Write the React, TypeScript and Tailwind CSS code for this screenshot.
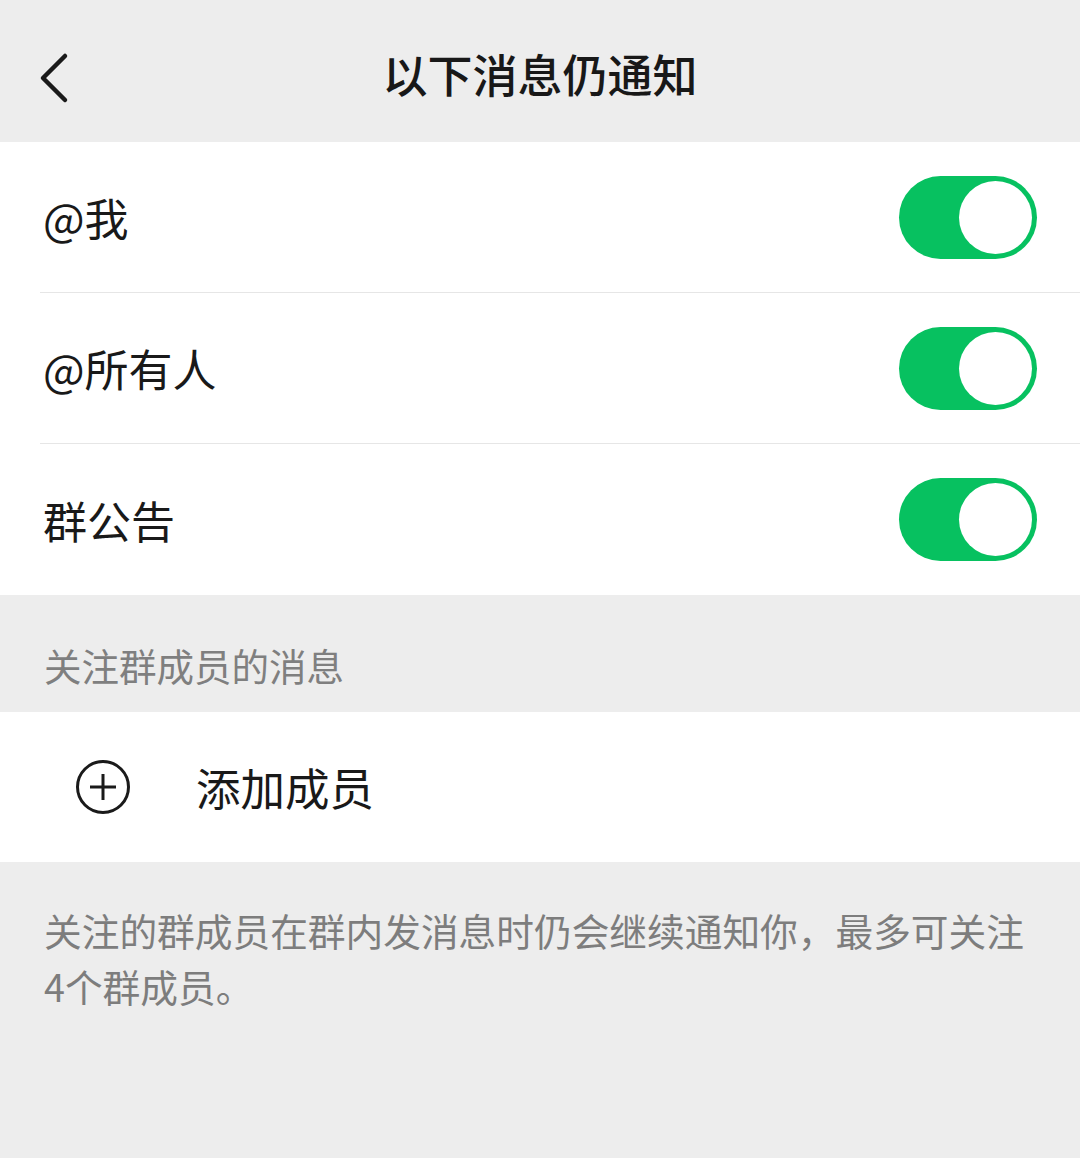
import { useState } from 'react'

const FONT = '"Noto Sans CJK SC", "Noto Sans", sans-serif'

function Toggle({ on, onChange }: { on: boolean; onChange: () => void }) {
  return (
    <button
      onClick={onChange}
      className={`relative flex items-center w-[138px] h-[83px] rounded-full p-[5px] ${
        on ? 'bg-[#07c160] justify-end' : 'bg-[#e5e5e5] justify-start'
      }`}
    >
      <span className="block w-[73px] h-[73px] rounded-full bg-white" />
    </button>
  )
}

const ITEMS = ['@我', '@所有人', '群公告']

export default function App() {
  const [state, setState] = useState([true, true, true])

  return (
    <div className="w-[1080px] h-[1158px] bg-[#ededed] flex flex-col" style={{ fontFamily: FONT }}>
      {/* Header */}
      <div className="relative h-[142px] flex items-center justify-center pt-[5px]">
        <svg
          className="absolute left-[36px] top-[52px]"
          width="36"
          height="52"
          viewBox="0 0 36 52"
          fill="none"
        >
          <path d="M29 4 L7 26 L29 48" stroke="#1a1a1a" strokeWidth="4.5" strokeLinecap="round" strokeLinejoin="round" />
        </svg>
        <span className="text-[45px] font-medium text-[#181818] leading-none">以下消息仍通知</span>
      </div>

      {/* Toggles */}
      <div className="bg-white">
        {ITEMS.map((label, i) => (
          <div key={label} className="pl-[40px]">
            <div
              className={`h-[151px] flex items-center justify-between pr-[43px] ${
                i < ITEMS.length - 1 ? 'border-b border-[#e6e6e6]' : ''
              }`}
            >
              <span className="pl-[3px] text-[44px] text-[#191919] leading-none">{label}</span>
              <Toggle
                on={state[i]}
                onChange={() => setState((s) => s.map((v, j) => (j === i ? !v : v)))}
              />
            </div>
          </div>
        ))}
      </div>

      {/* Section title */}
      <div className="h-[117px] flex items-center px-[44px] pt-[22px]">
        <span className="text-[37.5px] text-[#7f7f7f] leading-none">关注群成员的消息</span>
      </div>

      {/* Add member */}
      <div className="bg-white h-[150px] flex items-center">
        <svg className="ml-[75px]" width="56" height="56" viewBox="0 0 56 56" fill="none">
          <circle cx="28" cy="28" r="25.5" stroke="#1a1a1a" strokeWidth="3" />
          <path d="M28 15 V41 M15 28 H41" stroke="#1a1a1a" strokeWidth="3" />
        </svg>
        <span className="ml-[65px] text-[44.5px] text-[#191919] leading-none">添加成员</span>
      </div>

      {/* Footer note */}
      <div className="pl-[44px] pr-[36px] pt-[40px]">
        <p className="text-[37.7px] leading-[56px] text-[#7d7d7d]">
          关注的群成员在群内发消息时仍会继续通知你，最多可关注4个群成员。
        </p>
      </div>
    </div>
  )
}
